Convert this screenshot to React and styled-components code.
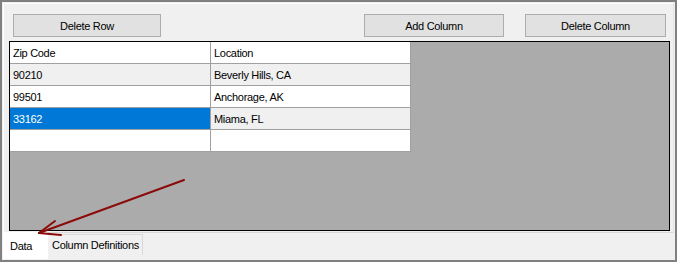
import React from "react";
import styled, { createGlobalStyle } from "styled-components";

const GlobalStyle = createGlobalStyle`
  html, body {
    margin: 0;
    padding: 0;
    background: #f0f0f0;
  }
  body {
    font-family: "Liberation Sans", Arial, sans-serif;
    font-size: 11px;
    letter-spacing: -0.3px;
    color: #000;
  }
`;

const Frame = styled.div`
  position: relative;
  width: 677px;
  height: 262px;
  box-sizing: border-box;
  border: 2px solid #808080;
  background: #f0f0f0;
  display: flex;
  flex-direction: column;
  overflow: hidden;
`;

const TabPage = styled.div`
  margin: 1px 1px 0 1px;
  height: 230px;
  box-sizing: border-box;
  border-top: 1px solid #fff;
  border-left: 1px solid #fff;
  border-right: 1px solid #e3e3e3;
  border-bottom: 1px solid #d9d9d9;
  padding: 10px 3px 0 5px;
  display: flex;
  flex-direction: column;
`;

const ButtonRow = styled.div`
  display: flex;
  justify-content: space-between;
  padding: 0 4px 0 4px;
  height: 23px;
  margin-bottom: 4px;
`;

const ButtonGroup = styled.div`
  display: flex;
  gap: 21px;
`;

const Button = styled.button`
  width: ${(p) => p.$w}px;
  height: 23px;
  box-sizing: border-box;
  background: #e1e1e1;
  border: 1px solid #adadad;
  font-family: "Liberation Sans", Arial, sans-serif;
  font-size: 11px;
  letter-spacing: -0.3px;
  color: #000;
  padding: 0;
`;

const Grid = styled.div`
  width: 661px;
  height: 190px;
  box-sizing: border-box;
  border: 1px solid #000;
  background: #ababab;
`;

const Table = styled.div`
  display: grid;
  grid-template-columns: 201px 200px;
  width: 401px;
`;

const Cell = styled.div`
  height: 22px;
  box-sizing: border-box;
  border-right: 1px solid #a0a0a0;
  border-bottom: 1px solid #a0a0a0;
  padding: 0 3px;
  display: flex;
  align-items: center;
  white-space: nowrap;
  background: ${(p) => (p.$selected ? "#0078d7" : p.$alt ? "#f0f0f0" : "#fff")};
  color: ${(p) => (p.$selected ? "#fff" : "#000")};
`;

const TabStrip = styled.div`
  display: flex;
  align-items: flex-start;
  padding-left: 1px;
  height: 27px;
`;

const Tab = styled.div`
  box-sizing: border-box;
  font-size: 11px;
  display: flex;
  align-items: center;
  white-space: nowrap;
  ${(p) =>
    p.$active
      ? `
    background: #fff;
    height: 27px;
    margin-top: -1px;
    padding: 0 0 0 7px;
    width: 45px;
  `
      : `
    background: #f0f0f0;
    height: 21px;
    margin-top: 1px;
    padding: 0 0 1px 4px;
    width: 95px;
    border-right: 1px solid #d9d9d9;
    border-top: 1px solid #d9d9d9;
  `}
`;

const Arrow = styled.svg`
  position: absolute;
  left: -2px;
  top: -2px;
  pointer-events: none;
`;

const rows = [
  ["Zip Code", "Location"],
  ["90210", "Beverly Hills, CA"],
  ["99501", "Anchorage, AK"],
  ["33162", "Miama, FL"],
  ["", ""],
];

export default function App() {
  return (
    <>
      <GlobalStyle />
      <Frame>
        <TabPage>
          <ButtonRow>
            <Button $w={148}>Delete Row</Button>
            <ButtonGroup>
              <Button $w={140}>Add Column</Button>
              <Button $w={141}>Delete Column</Button>
            </ButtonGroup>
          </ButtonRow>
          <Grid>
            <Table>
              {rows.map((r, i) =>
                r.map((c, j) => (
                  <Cell
                    key={i + "-" + j}
                    $alt={i % 2 === 1}
                    $selected={i === 3 && j === 0}
                  >
                    {c}
                  </Cell>
                ))
              )}
            </Table>
          </Grid>
        </TabPage>
        <TabStrip>
          <Tab $active>Data</Tab>
          <Tab>Column Definitions</Tab>
        </TabStrip>
        <Arrow width="677" height="262" viewBox="0 0 677 262">
          <g stroke="#8b0a0a" strokeWidth="2" fill="none" strokeLinecap="round">
            <line x1="184" y1="180" x2="39" y2="233" />
            <line x1="39" y1="233" x2="55" y2="221" />
            <line x1="39" y1="233" x2="61" y2="235" />
          </g>
        </Arrow>
      </Frame>
    </>
  );
}
